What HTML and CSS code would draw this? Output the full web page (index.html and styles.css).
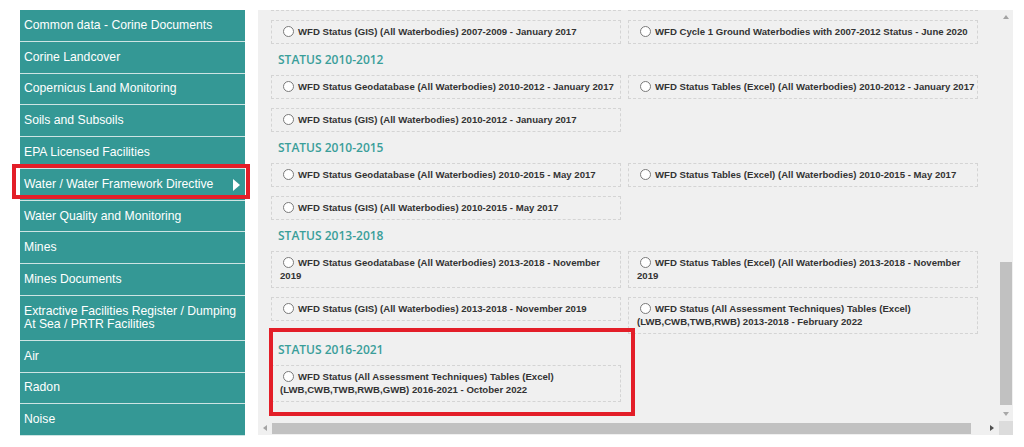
FILE: index.html
```html
<!DOCTYPE html>
<html>
<head>
    <title>WFD Status Downloads</title>
    <link rel="stylesheet" href="styles.css">
</head>
<body>
    <div class="page">
        <ul class="sidebar">
            <li>Common data - Corine Documents</li>
            <li>Corine Landcover</li>
            <li>Copernicus Land Monitoring</li>
            <li>Soils and Subsoils</li>
            <li>EPA Licensed Facilities</li>
            <li class="active marked">Water / Water Framework Directive</li>
            <li>Water Quality and Monitoring</li>
            <li>Mines</li>
            <li>Mines Documents</li>
            <li>Extractive Facilities Register / Dumping At Sea / PRTR Facilities</li>
            <li>Air</li>
            <li>Radon</li>
            <li>Noise</li>
        </ul>

        <div class="panel">
            <div class="viewport">
                <div class="content">
                    <div class="opts">
                        <!-- row scrolled out of view -->
                        <label class="opt"><input type="radio" name="ds"></label>
                        <label class="opt"><input type="radio" name="ds"></label>
                        <label class="opt"><input type="radio" name="ds">WFD Status (GIS) (All Waterbodies) 2007-2009 - January 2017</label>
                        <label class="opt"><input type="radio" name="ds">WFD Cycle 1 Ground Waterbodies with 2007-2012 Status - June 2020</label>
                    </div>

                    <div class="sec">
                        <h3>STATUS 2010-2012</h3>
                        <div class="opts">
                            <label class="opt"><input type="radio" name="ds">WFD Status Geodatabase (All Waterbodies) 2010-2012 - January 2017</label>
                            <label class="opt"><input type="radio" name="ds">WFD Status Tables (Excel) (All Waterbodies) 2010-2012 - January 2017</label>
                            <label class="opt"><input type="radio" name="ds">WFD Status (GIS) (All Waterbodies) 2010-2012 - January 2017</label>
                        </div>
                    </div>

                    <div class="sec">
                        <h3>STATUS 2010-2015</h3>
                        <div class="opts">
                            <label class="opt"><input type="radio" name="ds">WFD Status Geodatabase (All Waterbodies) 2010-2015 - May 2017</label>
                            <label class="opt"><input type="radio" name="ds">WFD Status Tables (Excel) (All Waterbodies) 2010-2015 - May 2017</label>
                            <label class="opt"><input type="radio" name="ds">WFD Status (GIS) (All Waterbodies) 2010-2015 - May 2017</label>
                        </div>
                    </div>

                    <div class="sec">
                        <h3>STATUS 2013-2018</h3>
                        <div class="opts">
                            <label class="opt"><input type="radio" name="ds">WFD Status Geodatabase (All Waterbodies) 2013-2018 - November 2019</label>
                            <label class="opt"><input type="radio" name="ds">WFD Status Tables (Excel) (All Waterbodies) 2013-2018 - November 2019</label>
                            <label class="opt"><input type="radio" name="ds">WFD Status (GIS) (All Waterbodies) 2013-2018 - November 2019</label>
                            <label class="opt"><input type="radio" name="ds">WFD Status (All Assessment Techniques) Tables (Excel) (LWB,CWB,TWB,RWB) 2013-2018 - February 2022</label>
                        </div>
                    </div>

                    <div class="sec marked">
                        <h3>STATUS 2016-2021</h3>
                        <div class="opts">
                            <label class="opt"><input type="radio" name="ds">WFD Status (All Assessment Techniques) Tables (Excel) (LWB,CWB,TWB,RWB,GWB) 2016-2021 - October 2022</label>
                        </div>
                    </div>
                </div>
            </div>

            <div class="vbar">
                <span class="arr up"></span>
                <div class="track"><div class="thumb"></div></div>
                <span class="arr down"></span>
            </div>

            <div class="hbar">
                <span class="arr left"></span>
                <div class="track"><div class="thumb"></div></div>
                <span class="arr right"></span>
            </div>

            <div class="corner"></div>
        </div>
    </div>
</body>
</html>
```

FILE: styles.css
```css
body {
    margin: 0;
    background: #fff;
    font-family: "Liberation Sans", Arial, sans-serif;
}
.page {
    display: flex;
    gap: 13px;
    padding: 10px 0 0 20px;
}

/* left menu */
.sidebar {
    width: 225px;
    margin: 0;
    padding: 0;
    list-style: none;
    background: #349895;
}
.sidebar li {
    position: relative;
    padding: 8.9px 6px 8.9px 4px;
    font-size: 12.2px;
    line-height: 13px;
    color: #fff;
    border-bottom: 1px solid #cde4e3;
}
.sidebar li.active::after {
    content: "";
    position: absolute;
    right: 5px;
    top: 10px;
    border-left: 7px solid #fff;
    border-top: 6px solid transparent;
    border-bottom: 6px solid transparent;
}
.marked::before {
    content: "";
    position: absolute;
    box-sizing: border-box;
    border: 4px solid #e31e28;
    z-index: 2;
}
.sidebar li.marked::before {
    left: -8px;
    top: -4.5px;
    width: 238px;
    height: 35px;
}

/* right panel */
.panel {
    width: 755px;
    height: 425px;
    background: #f0f0f0;
    display: grid;
    grid-template-columns: 1fr 14px;
    grid-template-rows: 1fr 14px;
}
.viewport {
    overflow: hidden;
}
.content {
    margin-top: -23px;
    padding-left: 13px;
}
.opts {
    display: grid;
    grid-template-columns: 350px 350px;
    column-gap: 7px;
    row-gap: 9px;
    align-items: start;
}
.opt {
    display: block;
    border: 1px dashed #d4d4d4;
    padding: 3.5px 1px 5.5px 8px;
    font-size: 9.6px;
    font-weight: bold;
    line-height: 13px;
    color: #333;
}
.opt input {
    appearance: none;
    -webkit-appearance: none;
    width: 11px;
    height: 11px;
    margin: 0 4px 0 3px;
    border: 1px solid #7a7a7a;
    border-radius: 50%;
    background: #fff;
    vertical-align: -2px;
}
.sec h3 {
    margin: 0;
    padding: 7.5px 0 7.5px 7px;
    font-family: "Open Sans", sans-serif;
    font-weight: 600;
    font-size: 12px;
    line-height: 16px;
    color: #3a9e9a;
}
.sec.marked {
    position: relative;
}
.sec.marked::before {
    left: -2px;
    top: -6px;
    width: 366px;
    height: 88px;
}

/* fake scrollbars */
.vbar {
    display: flex;
    flex-direction: column;
    align-items: center;
}
.vbar .arr {
    height: 14px;
    width: 14px;
    display: flex;
    align-items: center;
    justify-content: center;
}
.vbar .track {
    flex: 1;
    display: flex;
    flex-direction: column;
    justify-content: flex-end;
    padding-bottom: 2px;
}
.vbar .thumb {
    width: 12px;
    height: 143px;
    background: #c1c1c1;
}
.hbar {
    display: flex;
    align-items: center;
}
.hbar .arr {
    width: 14px;
    height: 14px;
    display: flex;
    align-items: center;
    justify-content: center;
}
.hbar .track {
    flex: 1;
}
.hbar .thumb {
    width: 699px;
    height: 11px;
    background: #c1c1c1;
}
.arr::after {
    content: "";
    display: block;
}
.arr.up::after {
    border-bottom: 4px solid #a3a3a3;
    border-left: 3.5px solid transparent;
    border-right: 3.5px solid transparent;
}
.arr.down::after {
    border-top: 4px solid #a8a8a8;
    border-left: 3.5px solid transparent;
    border-right: 3.5px solid transparent;
}
.arr.left::after {
    border-right: 4px solid #a3a3a3;
    border-top: 3.5px solid transparent;
    border-bottom: 3.5px solid transparent;
}
.arr.right::after {
    border-left: 4px solid #505050;
    border-top: 3.5px solid transparent;
    border-bottom: 3.5px solid transparent;
}
.corner {
    background: #dcdcdc;
}
```
